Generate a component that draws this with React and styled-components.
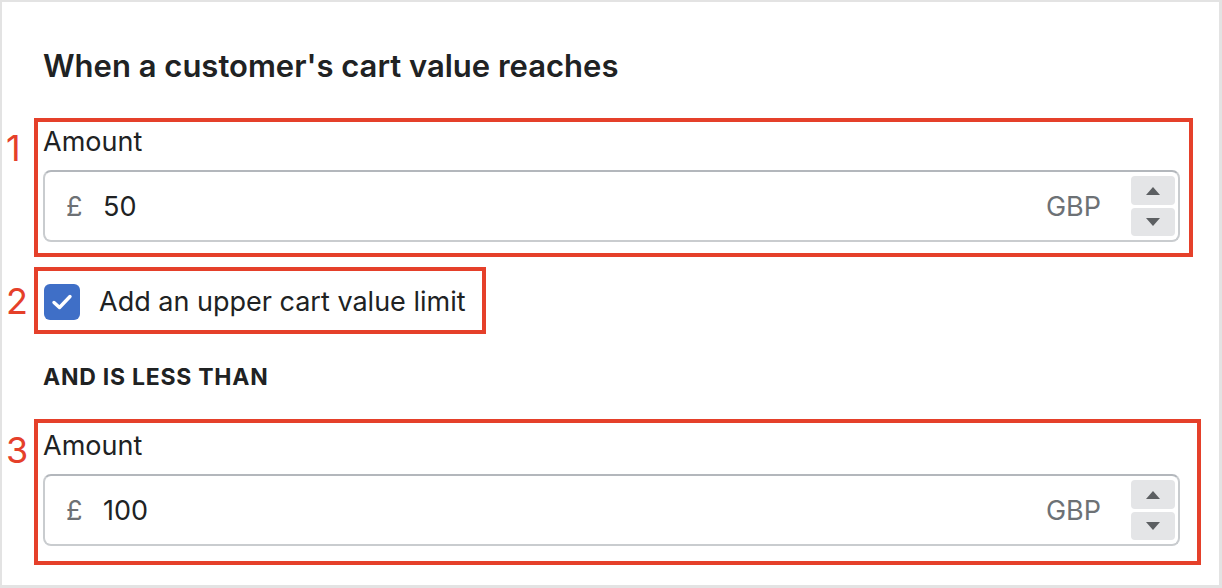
import React from "react";
import styled, { createGlobalStyle } from "styled-components";

const GlobalStyle = createGlobalStyle`
  html, body { margin: 0; padding: 0; background: #ffffff; }
  body { font-family: Inter, "Noto Sans", "Liberation Sans", sans-serif; color: #202223; }
  * { box-sizing: border-box; }
`;

const Frame = styled.div`
  width: 1222px;
  height: 588px;
  border-style: solid;
  border-color: #e3e3e3;
  border-width: 2px 3px 3px 2px;
  background: #ffffff;
  padding: 44px 39px 0 41px;
  display: flex;
  flex-direction: column;
`;

const Heading = styled.h2`
  margin: 0;
  font-size: 31px;
  line-height: 40px;
  font-weight: 600;
  color: #202223;
  letter-spacing: 0;
`;

const Highlight = styled.div`
  position: relative;
  border: 4px solid #e5402a;
  margin-left: -9px;
  margin-right: ${(p) => -(p.$extend ?? 13)}px;
  padding: ${(p) => p.$pad};
  margin-top: ${(p) => p.$top}px;
  align-self: ${(p) => (p.$inline ? "flex-start" : "stretch")};
`;

const Marker = styled.span`
  position: absolute;
  left: -32px;
  top: ${(p) => p.$top}px;
  font-size: 36px;
  line-height: 36px;
  font-weight: 400;
  color: #e5402a;
`;

const Label = styled.div`
  font-size: 27px;
  line-height: 36px;
  font-weight: 400;
  color: #202223;
  margin-bottom: 10px;
`;

const Field = styled.div`
  height: 72px;
  border: 2px solid #c9cccf;
  border-top-color: #b3b7bc;
  border-radius: 8px;
  display: flex;
  align-items: center;
  padding: 0 3px 0 21px;
  font-size: 27px;
`;

const Prefix = styled.span`
  color: #6d7175;
  width: 37px;
  flex: none;
`;

const Value = styled.span`
  flex: 1;
  color: #202223;
`;

const Suffix = styled.span`
  color: #6d7175;
  margin-right: 30px;
`;

const Spinner = styled.div`
  display: flex;
  flex-direction: column;
  gap: 3px;
  width: 44px;
`;

const SpinButton = styled.div`
  height: ${(p) => p.$h}px;
  background: #e4e5e7;
  border-radius: 4px;
  display: flex;
  align-items: center;
  justify-content: center;
`;

const CheckRow = styled.label`
  display: flex;
  align-items: center;
  gap: 19px;
  font-size: 27px;
  line-height: 36px;
  color: #202223;
`;

const Box = styled.span`
  width: 36px;
  height: 36px;
  border-radius: 6px;
  background: #3f6fc7;
  display: flex;
  align-items: center;
  justify-content: center;
  flex: none;
`;

const Subheading = styled.div`
  margin-top: 29px;
  font-size: 23px;
  line-height: 28px;
  font-weight: 700;
  letter-spacing: 0.75px;
  text-transform: uppercase;
  color: #202223;
`;

const Triangle = ({ up }) => (
  <svg width="14" height="8" viewBox="0 0 14 8">
    <path d={up ? "M0 8 L7 0 L14 8 Z" : "M0 0 L14 0 L7 8 Z"} fill="#5c5f62" />
  </svg>
);

const AmountField = ({ value }) => (
  <>
    <Label>Amount</Label>
    <Field>
      <Prefix>£</Prefix>
      <Value>{value}</Value>
      <Suffix>GBP</Suffix>
      <Spinner>
        <SpinButton $h={29}>
          <Triangle up />
        </SpinButton>
        <SpinButton $h={28}>
          <Triangle />
        </SpinButton>
      </Spinner>
    </Field>
  </>
);

export default function App() {
  return (
    <>
      <GlobalStyle />
      <Frame>
        <Heading>When a customer's cart value reaches</Heading>
        <Highlight $top={32} $extend={13} $pad="2px 9px 11px 5px">
          <Marker $top={8}>1</Marker>
          <AmountField value="50" />
        </Highlight>
        <Highlight $top={10} $inline $pad="13px 16px 10px 6px">
          <Marker $top={12}>2</Marker>
          <CheckRow>
            <Box>
              <svg width="22" height="18" viewBox="0 0 22 18">
                <path
                  d="M3 9.5 L8.5 14.5 L19 3.5"
                  fill="none"
                  stroke="#ffffff"
                  strokeWidth="3.4"
                  strokeLinecap="round"
                  strokeLinejoin="round"
                />
              </svg>
            </Box>
            Add an upper cart value limit
          </CheckRow>
        </Highlight>
        <Subheading>And is less than</Subheading>
        <Highlight $top={28} $extend={21} $pad="5px 17px 15px 5px">
          <Marker $top={9}>3</Marker>
          <AmountField value="100" />
        </Highlight>
      </Frame>
    </>
  );
}
